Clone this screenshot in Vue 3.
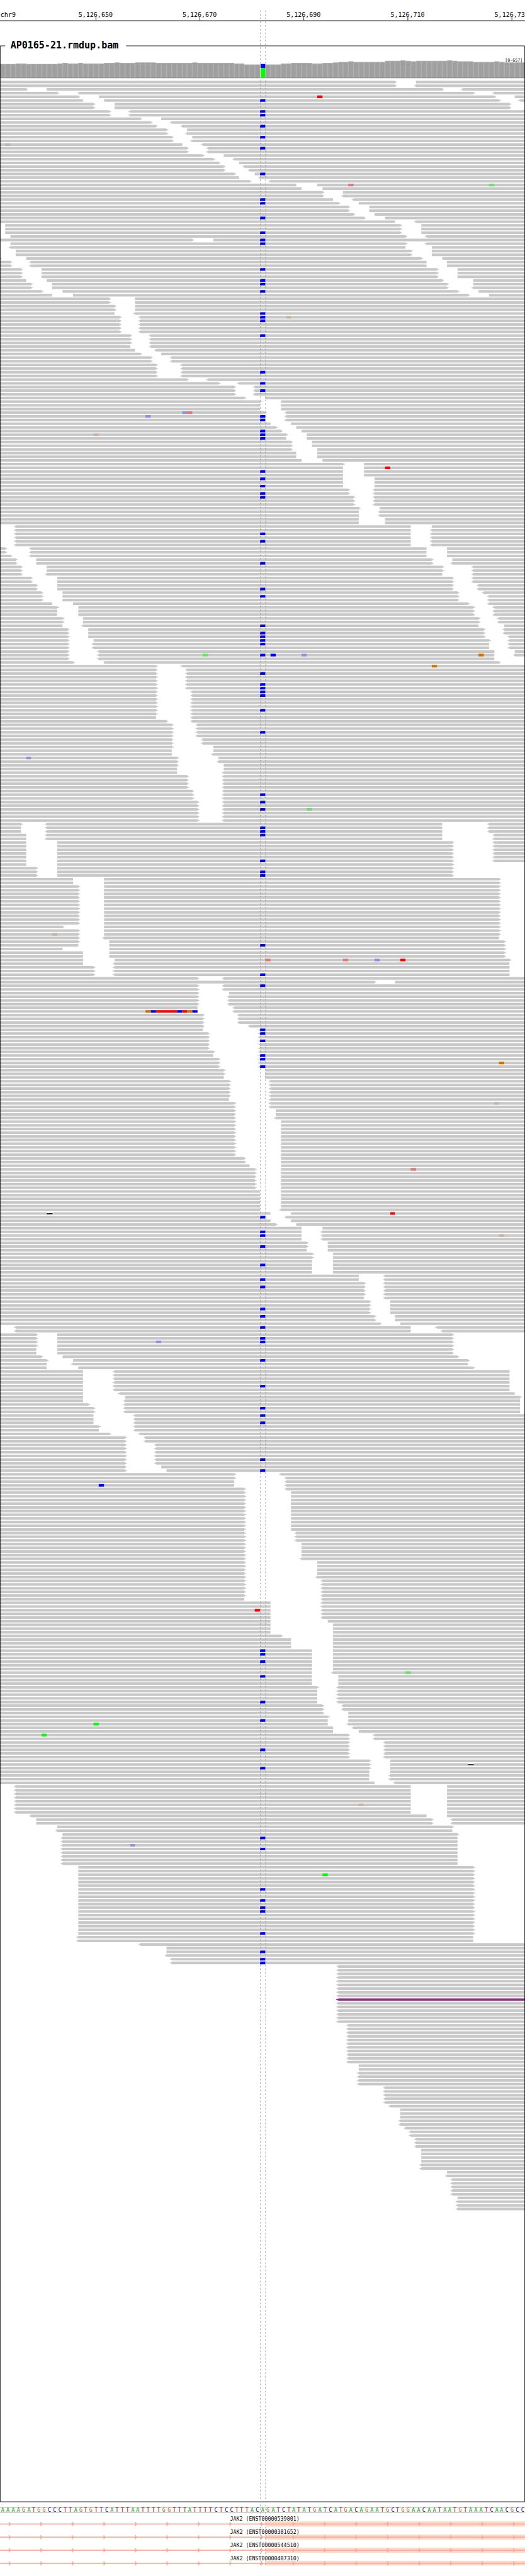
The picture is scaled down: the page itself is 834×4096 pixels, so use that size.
<script setup>
const BASE = 9.9
const LAST = 101
const px = (base) => Math.round(base * BASE)

const ticks = [
  { x: 182, label: '5,126,650' },
  { x: 380, label: '5,126,670' },
  { x: 578, label: '5,126,690' },
  { x: 776, label: '5,126,710' },
  { x: 974, label: '5,126,730' },
]

// Coverage bar tops, written as top*count.
const coverage = '122*3 121*2 122*6 121 120 121*2 120 121*4 120*2 119 120*3 119*4 120*7 119 120*7 121*2 123*7 121*2 120*4 121*2 120*2 119 118*2 117 118*6 116*3 115 116 117 116*6 115 116 117*3 118*4 117 118 119*4'
  .split(' ')
  .flatMap((run) => {
    const [top, count = 1] = run.split('*').map(Number)
    return Array(count).fill(top)
  })
const skipVariant = (top, base) => base !== 50
const barEdges = coverage
  .map((top, b) => (skipVariant(top, b) ? `M${px(b)} ${top}H${px(b + 1)}V148H${px(b)}Z` : ''))
  .join('')
const barCores = coverage
  .map((top, b) => (skipVariant(top, b) ? `M${px(b) + 1} ${top + 1}H${px(b + 1) - 1}V148H${px(b) + 1}Z` : ''))
  .join('')

// Uncovered spans of each alignment row, in bases. "3x" repeats a row;
// ">" marks a read ending in an arrow, "<" a read starting with one.
const layout = `
76>-80
76>-80<
5>-9 85>-89<
11>-15 91>-95<
15>-19 95>-99
16-20 96>-100<
2x 18>-22 98>-101
2x 21>-25<
27>-31
29>-33<
30>-35<
32>-36
32>-36<
33>-37
33>-37<
35-39<
2x 36>-40<
39>-43
41>-45<
42>-46
43>-47<
43>-48<
45>-49
46-50<
48>-52<
57-61
58-62
62>-66
62>-66<
64-68<
65>-69
2x 67>-71
68>-72
70>-74
76-80<
3x 0-1 77>-81
0-2 78>-82<
37>-41
0-2 78>-82<
0-2< 78-83
2x 0-3 79>-83
0>-5 81>-85
2x 2>-6< 82-86
3x 4>-8 84>-88
5-9 85>-91
6>-10 86>-91
6>-10 86>-91<
8>-12 88>-92
10-14 90>-94
2x 21>-26
2x 22>-26
22-26<
5x 23>-27<
3x 25>-29<
25-29<
26-30<
27>-31
2x 29>-33<
4x 30>-35<
36>-40<
42>-46<
3x 45>-49<
47>-51
50>-54
2x 50-54
2x 51>-55<
51-55<
52-56
53>-57
54>-58
55>-59
55-59
2x 56>-60
56>-61
2x 57-61
58-62
66>-70
3x 66-70
3x 66-72
2x 67>-72<
3x 68>-72<
69>-73
2x 69-73<
2x 69-74
0-3< 79-83
5x 0-3< 79-83<
2x 1>-6< 82-86
2>-6< 82-86
3>-7 83>-87
3>-7 83>-87<
2x 4>-9 85>-91<
4>-9< 85-91<
2x 6>-11 87>-91<
2x 7>-11 87>-92<
8>-12 88>-93<
2x 8>-12 88>-94<
10-14 90>-94<
11>-15 91>-95<
2x 11-15 91>-95<
2x 12>-16 92>-96<
12-16< 92-97
2x 13>-17 93>-97<
13>-17 93>-98<
13>-18 94>-98<
2x 13>-18< 94-98<
13>-19< 95-99
13>-19< 95-99<
13>-19< 95-101
14>-20 96>-101
30>-35<
6x 30>-36<
7x 30>-37<
30-37<
32>-37<
4x 33>-38<
2x 33>-39<
33>-41
33-41
33-41<
34>-42
34>-42<
34>-43
34-43
34-43<
4x 36>-43<
3x 37>-43<
6x 38>-43<
4>-9< 85-94<
2x 4-9< 85-94<
2x 5-9< 85-95<
6x 5-11 87>-95<
5-11 87>-101
3x 7>-11 87>-101
2x 14-20 96>-101
11x 15>-20 96>-101
12>-20 96>-101
2x 15>-20 96>-101
15>-20< 96-101
15>-21 97>-101
15-21 97>-101
12-21 97>-101
2x 16-21 97>-101
16-22 98>-101
16-22< 98-101
3x 18>-22< 98-101
38>-43<
72>-76
2x 38>-43<
38>-44
3x 38>-44<
2x 38-45<
3x 39>-46<
39>-48<
39-50<
5x 40>-50<
41>-50<
41-50<
3x 42>-50<
2x 43>-51
43-51
5x 44>-52<
44-52<
2x 45>-52<
2x 45>-53
45>-53<
10x 45>-54
2x 47>-54
48-54
6x 49>-54
5x 50-54
50-54<
52-56
51>-55<
52-56
53>-57
58-62
3x 58-62<
2x 59>-63
59-63
2x 60>-64
4x 60-64
2x 69-74<
4x 70>-74<
70-74<
4x 71>-75
2x 72>-76
73>-77
0-3< 79-84<
0-3< 79-85<
4x 7>-11 87>-101
2x 7-11 87>-101
8>-12 88>-101
9>-14 90>-101
9-14< 90-101
9-15 91>-101
6x 16-22< 98-101
16-23< 99-101
16-24 100>-101
16-24< 100-101
17>-24< 100-101
2x 18>-24< 100-101
3x 18-26<
19>-26<
19-26<
21>-27<
2x 24>-28<
6x 24>-30<
24>-31
24>-32
45>-54<
45>-55<
2x 45-55<
47>-55<
11x 47>-56
3x 47>-57<
4x 47>-58
47>-58<
4x 47>-61
47>-61<
5x 47>-62<
47-62<
5x 52-62<
52-63
3x 52-64
54>-64
3x 56-64
6x 60-64
60-64<
3x 60-65
61>-65<
4x 61-65<
2x 62>-66<
62>-67
63>-67
63-67
63-67<
64-68<
64-69
2x 67>-72<
5x 67>-74<
3x 71>-75
71-75
2x 71-75<
72-76<
8x 0-3< 79-86
0-6< 82-86
2x 0-7 83>-87<
0-11 87>-101
0-11< 87-101
0-12 88>-101
8x 0-12< 88-101
19x 0-15 91>-101
2x 0-15< 91-101
0-27<
2x 0-32
0-32<
2x 0-33<
16x 0-65<
11x 0-67<
2x 0-69
4x 0-69<
5x 0-74<
0-75<
3x 0-77
2x 0-77<
0-78<
2x 0-79<
3x 0-80<
4x 0-81
2x 0-81<
0-86
0-86<
5x 0-87<
0-88
3x 0-88<
`

const rows = layout.trim().split('\n').flatMap((line) => {
  const [, count, spans] = line.match(/^(?:(\d+)x )?(.*)$/)
  return Array(Number(count || 1)).fill(spans)
})

const rowTop = (row) => 154 + 7 * row

function segment(from, to, y, headLeft, headRight) {
  const a = px(from)
  const b = px(to)
  let d = b > a ? `M${a} ${y}H${b}v5H${a}Z` : ''
  if (headLeft) d += `M${a} ${y + 1}h-2v1h-2v1h2v1h2Z`
  if (headRight) d += `M${b} ${y + 1}h2v1h2v1h-2v1h-2Z`
  return d
}

function rowPath(spans, row) {
  const y = rowTop(row)
  let cursor = 0
  let head = false
  let d = ''
  for (const [, start, right, end, left] of spans.matchAll(/(\d+)(>?)-(\d+)(<?)/g)) {
    d += segment(cursor, Number(start), y, head, right === '>')
    cursor = Number(end)
    head = left === '<'
  }
  if (cursor < LAST) d += segment(cursor, LAST, y, head, false)
  return d
}

const FAR_MATE_ROW = 522
const readsPath = rows.map((s, i) => (i === FAR_MATE_ROW ? '' : rowPath(s, i))).join('')
const farMatePath = rowPath(rows[FAR_MATE_ROW], FAR_MATE_ROW)

const variantRows = [
  5, 8, 9, 12, 15, 18, 25, 32, 33, 37, 41, 43, 44, 51, 54, 55, 57, 63, 64, 65, 69, 79, 82, 84,
  91, 92, 95, 96, 97, 106, 108, 110, 112, 113, 123, 125, 131, 138, 140, 148, 150, 151, 152, 153,
  156, 161, 164, 165, 166, 167, 171, 177, 194, 196, 198, 203, 204, 205, 212, 215, 216, 235, 243,
  246, 258, 259, 261, 265, 266, 268, 309, 313, 314, 317, 322, 326, 328, 334, 336, 339, 342, 343,
  348, 355, 361, 363, 365, 375, 378, 427, 428, 430, 434, 441, 446, 454, 459, 478, 481, 492, 495,
  497, 498, 504, 509, 511, 512,
]

// Mismatched bases as [row, base], grouped by nucleotide and base quality.
const mismatches = {
  'c-high': [...variantRows.map((r) => [r, 50]), [156, 52], [253, 29], [253, 34], [253, 37], [382, 19]],
  'c-low': [[90, 35], [91, 28], [156, 58], [184, 5], [239, 72], [343, 30], [480, 25]],
  't-high': [[4, 61], [105, 74], [239, 77], [253, 30], [253, 31], [253, 32], [253, 33], [253, 35], [308, 75], [416, 49]],
  't-low': [[28, 67], [90, 36], [239, 51], [239, 66], [296, 79]],
  'a-high': [[447, 18], [450, 8], [488, 62]],
  'a-low': [[28, 94], [156, 39], [198, 59], [433, 78]],
  'g-high': [[156, 92], [159, 83], [253, 28], [253, 36], [267, 96]],
  'g-low': [[17, 1], [64, 55], [96, 18], [232, 10], [278, 95], [314, 96], [469, 69]],
}
const mismatchPaths = Object.entries(mismatches).map(([kind, list]) => ({
  kind,
  d: list.map(([r, b]) => `M${px(b)} ${rowTop(r)}H${px(b + 1)}v5H${px(b)}Z`).join(''),
}))

const deletions = [[308, 9], [458, 90]].map(([r, b]) => ({ x: px(b), y: rowTop(r) }))

const sequence = [
  ...('AAAAGATGGCCCTTAGTGTTCATTTAATTTTGGTTTATTTTCTCCTTTAC' +
    'AGATCTATATGATCATGACAGAATGCTGGAACAATAATGTAAATCAACGCC'),
]

const transcripts = ['ENST00000539801', 'ENST00000381652', 'ENST00000544510', 'ENST00000487310'].map(
  (id, i) => ({ id, y: 4809 + 25 * i })
)
const strandMarks = Array.from({ length: 17 }, (_, i) => 17 + 60 * i)
const strandPath = (y) => strandMarks.map((x) => `M${x} ${y - 3}h1l3 4l-3 4h-1Z`).join('')
</script>

<template>
  <main class="browser">
    <header class="track">
      <svg class="canvas" viewBox="0 0 999.5 60" role="img" aria-label="Position on chr9">
        <text class="ruler" x="1" y="32">chr9</text>
        <g v-for="t in ticks" :key="t.x">
          <text class="ruler middle" :x="t.x" y="32">{{ t.label }}</text>
          <rect :x="t.x" y="32" width="1" height="7" />
        </g>
        <rect x="0" y="39" width="1000" height="1" />
      </svg>
    </header>

    <section class="track">
      <svg class="canvas" viewBox="0 60 999.5 4710" role="img" aria-label="AP0165-21.rmdup.bam alignments">
        <text class="title" x="20" y="92">AP0165-21.rmdup.bam</text>
        <path class="bar-edge" :d="barEdges" />
        <path class="bar-core" :d="barCores" />
        <rect class="c-high" x="496" y="122" width="9" height="8" />
        <rect class="a-high" x="496" y="130" width="9" height="18" />
        <rect class="bar-floor" x="1" y="148" width="998" height="1" />
        <text class="range" x="995" y="117">[0-657]</text>

        <path class="read" :d="readsPath" />
        <path class="far-mate" :d="farMatePath" />
        <path v-for="m in mismatchPaths" :key="m.kind" :class="m.kind" :d="m.d" />
        <g v-for="d in deletions" :key="d.y">
          <rect class="blank" :x="d.x" :y="d.y" width="11" height="5" />
          <rect :x="d.x" :y="d.y + 2" width="11" height="2" />
        </g>

        <path class="frame" d="M10 87.5H0.5V4767.5H999V87.5H240" />
      </svg>
    </section>

    <footer class="track">
      <svg class="canvas" viewBox="0 4770 999.5 139" role="img" aria-label="Reference sequence and JAK2 transcripts">
        <rect class="rule" x="0" y="4778" width="1000" height="1" />
        <rect class="rule" x="0" y="4788" width="1000" height="1" />
        <text
          v-for="(base, i) in sequence"
          :key="i"
          class="base middle"
          :class="`nt-${base}`"
          :x="px(i) + 5"
          y="4787"
        >{{ base }}</text>

        <g v-for="t in transcripts" :key="t.id">
          <rect class="exon" x="505" :y="t.y - 4" width="495" :height="t.y > 4880 ? 9 : 10" />
          <rect class="gene" x="0" :y="t.y" width="1000" height="2" />
          <path class="gene" :d="strandPath(t.y)" />
          <text class="gene-label middle" x="504" :y="t.y - 5">JAK2 ({{ t.id }})</text>
        </g>
      </svg>
    </footer>

    <svg class="guides" viewBox="0 0 999.5 4909" aria-hidden="true">
      <path class="guide" d="M495.5 20V121M505.5 20V121M495.5 153V4888M505.5 153V4888" />
    </svg>
  </main>
</template>

<style>
body {
  margin: 0;
  background: #fff;
}
</style>

<style scoped>
.browser {
  position: relative;
  width: 100%;
  overflow: hidden;
  background: #fff;
  font-family: "DejaVu Sans Mono", "Liberation Mono", monospace;
}

.track {
  display: block;
}

.canvas {
  display: block;
  width: 100%;
  height: auto;
}

.guides {
  position: absolute;
  top: 0;
  left: 0;
  width: 100%;
  height: auto;
  pointer-events: none;
}

.guide {
  fill: none;
  stroke: #969696;
  stroke-width: 1;
  stroke-dasharray: 3 4;
}

.ruler {
  font-size: 12px;
}

.title {
  font-size: 18px;
  font-weight: bold;
}

.range {
  font-size: 8px;
  text-anchor: end;
}

.base,
.gene-label {
  font-size: 10px;
}

.middle {
  text-anchor: middle;
}

.frame {
  fill: none;
  stroke: #000;
  stroke-width: 1;
}

.bar-edge { fill: #b0b0b0; }
.bar-core { fill: #a0a0a0; }
.bar-floor { fill: #707070; }
.read { fill: #c8c8c8; }
.far-mate { fill: #8e2d82; }
.blank { fill: #fff; }

.a-high { fill: #00ff00; }
.a-low { fill: #64e664; }
.c-high { fill: #0000ff; }
.c-low { fill: #9090dc; }
.g-high { fill: #d27000; }
.g-low { fill: #c8b4a0; }
.t-high { fill: #ff0000; }
.t-low { fill: #e07878; }

.rule { fill: #a0a0a0; }
.nt-A { fill: #009600; }
.nt-C { fill: #000096; }
.nt-G { fill: #a86410; }
.nt-T { fill: #a00000; }

.gene { fill: #ffa898; }
.exon { fill: #ffdac8; }
</style>
